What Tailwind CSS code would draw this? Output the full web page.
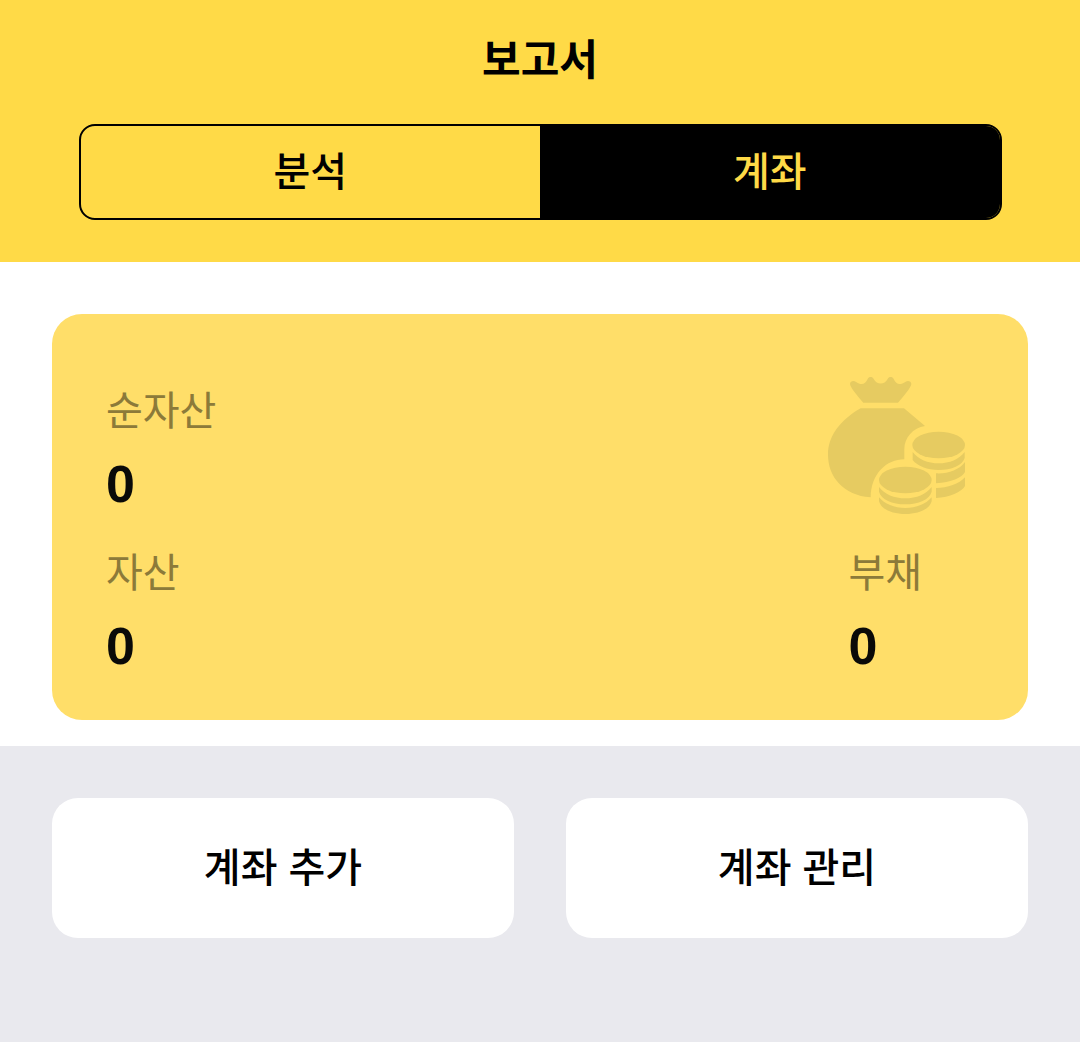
<!DOCTYPE html>
<html lang="ko">
<head>
    <meta charset="UTF-8">
    <title>보고서</title>
    <script src="https://cdn.jsdelivr.net/npm/@tailwindcss/browser@4"></script>
</head>
<body class="bg-[#e9e9ee] font-['Liberation_Sans','Noto_Sans_CJK_KR',sans-serif]">
    <div class="w-[1080px] h-[1042px] overflow-hidden">
        <!-- Header -->
        <header class="h-[262px] bg-[#ffda47] flex flex-col items-center">
            <h1 class="h-[124px] pb-[4px] flex items-center text-[42px] font-bold text-black">보고서</h1>
            <div class="w-[923px] h-[96px] flex border-2 border-black rounded-[16px] overflow-hidden">
                <div class="flex-1 flex items-center justify-center text-[40px] font-medium text-black">분석</div>
                <div class="flex-1 flex items-center justify-center text-[40px] font-medium text-[#ffda47] bg-black">계좌</div>
            </div>
        </header>

        <!-- Summary -->
        <section class="h-[484px] bg-white px-[52px] pt-[52px]">
            <div class="relative h-[406px] rounded-[30px] bg-[#ffde69] pl-[54px] pr-[106px] pt-[56px]">
                <div class="h-[82px] flex items-center text-[40px] text-[#8c7a39] leading-none pt-[-2px]">순자산</div>
                <div class="h-[64px] flex items-center text-[52px] font-bold text-[#0a0a08] leading-none">0</div>
                <div class="mt-[16px] flex justify-between">
                    <div>
                        <div class="h-[82px] flex items-center text-[40px] text-[#8c7a39] leading-none">자산</div>
                        <div class="h-[64px] flex items-center text-[52px] font-bold text-[#0a0a08] leading-none">0</div>
                    </div>
                    <div>
                        <div class="h-[82px] flex items-center text-[40px] text-[#8c7a39] leading-none">부채</div>
                        <div class="h-[64px] flex items-center text-[52px] font-bold text-[#0a0a08] leading-none">0</div>
                    </div>
                </div>
                <svg class="absolute left-[748px] top-[46px] w-[190px] h-[170px]" viewBox="0 0 570 510" fill="#e6cb61">
                    <path d="M150 72c0-8 10-12 17-7 18 12 28 8 36-8 4-8 14-8 18 0 10 18 32 18 42 0 4-8 14-8 18 0 8 16 18 20 36 8 7-5 17-1 17 7 0 10-26 40-40 56H190c-14-16-40-46-40-56z"/>
                    <path d="M182 145h130l63 53c-36 6-62 34-62 70v30c-54 0-100 44-101 114C130 406 84 350 84 284c0-58 40-106 98-139z"/>
                    <ellipse cx="416" cy="255" rx="79" ry="40"/>
                    <path d="M338 276c16 22 46 34 78 34s62-12 78-34v18c-6 22-40 36-78 36-34 0-64-12-78-30z"/>
                    <path d="M408 340c34 2 70-10 87-34v30c-8 16-42 32-87 34z"/>
                    <path d="M408 384c34 0 70-12 87-32v26c-10 18-46 34-87 36z"/>
                    <ellipse cx="316" cy="360" rx="79" ry="40"/>
                    <path d="M237 381c16 22 46 34 79 34s63-12 79-34v14c-6 24-40 38-79 38s-73-14-79-38z"/>
                    <path d="M237 412c16 20 46 32 79 32s63-12 79-32v12c-6 24-40 38-79 38s-73-14-79-38z"/>
                </svg>
            </div>
        </section>

        <!-- Actions -->
        <section class="px-[52px] pt-[52px] grid grid-cols-2 gap-[52px]">
            <button class="h-[140px] bg-white rounded-[26px] text-[40px] font-medium text-black">계좌 추가</button>
            <button class="h-[140px] bg-white rounded-[26px] text-[40px] font-medium text-black">계좌 관리</button>
        </section>
    </div>
</body>
</html>
